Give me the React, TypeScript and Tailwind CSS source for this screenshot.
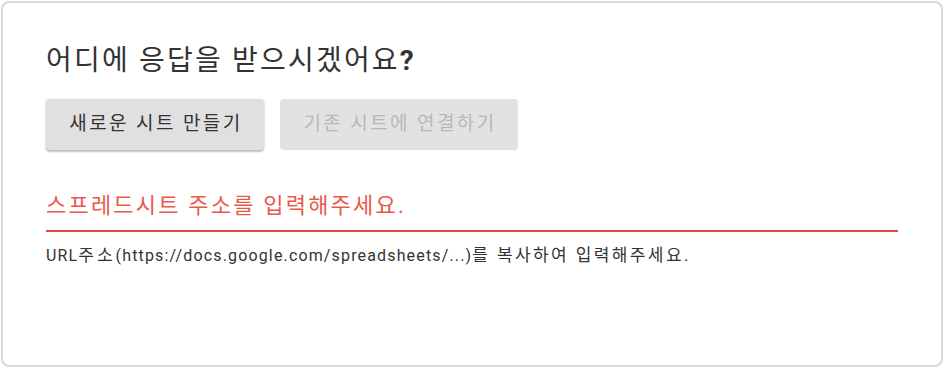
export default function App() {
  const font = { fontFamily: "Roboto, 'Noto Sans CJK KR', sans-serif" };
  return (
    <div className="h-[368px] w-[944px] bg-white p-px" style={font}>
      <div className="h-full w-full rounded-lg border-2 border-[#d9d9d9] bg-white px-[43px] pt-[40px]">
        <h1 className="text-[28px] leading-[36px] tracking-[2.2px] text-[#333333]">
          어디에 응답을 받으시겠어요<span className="font-bold tracking-normal">?</span>
        </h1>
        <div className="mt-[20px] flex gap-4">
          <button
            type="button"
            className="h-[51px] w-[218px] rounded bg-[#e0e0e0] pl-[2px] text-[19px] tracking-[2.4px] text-[#333333] shadow-[0_2px_2px_rgba(0,0,0,0.24),0_0_2px_rgba(0,0,0,0.12)]"
          >
            새로운 시트 만들기
          </button>
          <button
            type="button"
            disabled
            className="h-[51px] w-[238px] rounded bg-[#e2e2e2] pl-[2px] text-[19px] tracking-[2.4px] text-[#b8b8b8]"
          >
            기존 시트에 연결하기
          </button>
        </div>
        <div className="mt-[41px] border-b-2 border-[#e04b3f] pb-[9px]">
          <p className="text-[22px] leading-[30px] tracking-[2.2px] text-[#e8594c]">스프레드시트 주소를 입력해주세요.</p>
        </div>
        <p className="mt-[12px] text-[16px] leading-[22px] tracking-[1.15px] text-[#333333]">
          URL<span className="text-[17px] tracking-[3px]">주소</span>(https://docs.google.com/spreadsheets/...)
          <span className="text-[17px] tracking-[2.4px]">를 복사하여 입력해주세요.</span>
        </p>
      </div>
    </div>
  );
}
